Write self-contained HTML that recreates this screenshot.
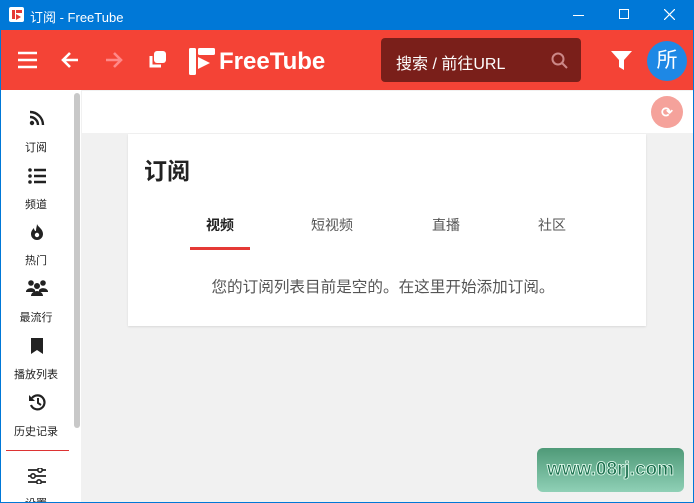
<!DOCTYPE html>
<html><head><meta charset="utf-8"><style>
*{margin:0;padding:0;box-sizing:border-box}
html,body{width:694px;height:503px;overflow:hidden}
body{background:#0078d7;font-family:"Liberation Sans","Noto Sans CJK SC",sans-serif;position:relative}
.abs{position:absolute}
</style></head><body>
<div class="abs" style="left:0;top:0;width:694px;height:30px;background:#0078d7;color:#fff;font-size:13px">
 <div class="abs" style="left:9px;top:7px;width:15px;height:15px;background:#fff;border-radius:2px"><div class="abs" style="left:3px;top:3px;width:3px;height:9px;background:#e53935"></div><div class="abs" style="left:7px;top:3px;width:6px;height:3px;background:#e53935"></div><div class="abs" style="left:7px;top:7px;width:0;height:0;border-left:5px solid #e53935;border-top:3px solid transparent;border-bottom:3px solid transparent"></div></div>
 <div class="abs" style="left:30px;top:7px">订阅 - FreeTube</div>
 <div class="abs" style="left:573px;top:15px;width:11px;height:1px;background:#fff"></div>
 <div class="abs" style="left:619px;top:9px;width:10px;height:10px;border:1px solid #fff"></div>
 <svg class="abs" style="left:664px;top:9px" width="11" height="11"><path d="M0 0l11 11M11 0L0 11" stroke="#fff" stroke-width="1.2"/></svg>
</div>
<div class="abs" style="left:1px;top:30px;width:692px;height:472px;background:#f1f1f1"></div>
<div class="abs" style="left:1px;top:30px;width:692px;height:60px;background:#f44336">
 <svg class="abs" style="left:17px;top:21px" width="20" height="18"><path d="M0 2h19M0 9h19M0 16h19" stroke="#fff" stroke-width="2.6"/></svg>
 <svg class="abs" style="left:59px;top:20px" width="20" height="20"><path d="M18 10H3M10 3L3 10l7 7" stroke="#fff" stroke-width="2.6" fill="none"/></svg>
 <svg class="abs" style="left:103px;top:20px" width="20" height="20"><path d="M2 10h15M10 3l7 7-7 7" stroke="#f88" stroke-width="2.6" fill="none"/></svg>
 <svg class="abs" style="left:145px;top:19px" width="22" height="22"><rect x="8" y="2" width="12" height="12" rx="3" fill="#fff"/><path d="M5 7v10h10" stroke="#fff" stroke-width="3" fill="none"/></svg>
 <svg class="abs" style="left:188px;top:18px" width="28" height="27"><rect x="0" y="0" width="7" height="27" rx="1.5" fill="#fff"/><rect x="9" y="0" width="17" height="7" rx="1.5" fill="#fff"/><path d="M9 9l12 6-12 6z" fill="#fff"/></svg>
 <div class="abs" style="left:218px;top:18px;color:#fff;font-size:24px;font-weight:bold;font-family:'Liberation Sans',sans-serif">FreeTube</div>
 <div class="abs" style="left:380px;top:8px;width:200px;height:44px;background:#7a1f1a;border-radius:4px">
  <div class="abs" style="left:15px;top:12px;color:#fff;font-size:16px">搜索 / 前往URL</div>
  <svg class="abs" style="left:170px;top:14px" width="18" height="18"><circle cx="7" cy="7" r="5.5" stroke="#c88" stroke-width="2" fill="none"/><path d="M11 11l5 5" stroke="#c88" stroke-width="2"/></svg>
 </div>
 <svg class="abs" style="left:610px;top:21px" width="22" height="20"><path d="M0 0h21l-8 9v10l-5-3V9z" fill="#fff"/></svg>
 <div class="abs" style="left:646px;top:11px;width:40px;height:40px;border-radius:50%;background:#1e88e5;color:#fff;font-size:21px;text-align:center;line-height:40px">所</div>
</div>
<div class="abs" style="left:1px;top:90px;width:80px;height:412px;background:#fff;font-size:11px;color:#222;text-align:center;overflow:hidden">
 <div class="abs" style="left:73px;top:3px;width:6px;height:335px;background:#c8c8c8;border-radius:3px"></div>
 <svg class="abs" style="left:28px;top:20px" width="16" height="16"><circle cx="3" cy="13" r="2.2" fill="#222"/><path d="M1 7a8 8 0 0 1 8 8M1 2a13 13 0 0 1 13 13" stroke="#222" stroke-width="2.4" fill="none"/></svg>
 <div class="abs" style="left:0;width:70px;top:49px">订阅</div>
 <svg class="abs" style="left:27px;top:78px" width="18" height="16"><circle cx="2" cy="2" r="1.8" fill="#222"/><circle cx="2" cy="8" r="1.8" fill="#222"/><circle cx="2" cy="14" r="1.8" fill="#222"/><path d="M6 2h12M6 8h12M6 14h12" stroke="#222" stroke-width="2.4"/></svg>
 <div class="abs" style="left:0;width:70px;top:106px">频道</div>
 <svg class="abs" style="left:29px;top:134px" width="14" height="16"><path d="M7 0c1 3 6 5 6 10a6 6 0 0 1-12 0c0-3 2-5 3-6 0 2 1 3 2 3 0-3 1-5 1-7z" fill="#222"/><circle cx="7" cy="11" r="2.2" fill="#fff"/></svg>
 <div class="abs" style="left:0;width:70px;top:162px">热门</div>
 <svg class="abs" style="left:25px;top:190px" width="22" height="16"><circle cx="5" cy="3" r="2.8" fill="#222"/><circle cx="17" cy="3" r="2.8" fill="#222"/><circle cx="11" cy="6" r="3" fill="#222"/><path d="M0 11a5 4 0 0 1 9-1v2H0zM13 10a5 4 0 0 1 9 1v1h-9zM5 16a6 5 0 0 1 12 0z" fill="#222"/></svg>
 <div class="abs" style="left:0;width:70px;top:219px">最流行</div>
 <svg class="abs" style="left:30px;top:248px" width="12" height="16"><path d="M0 0h12v16l-6-4-6 4z" fill="#222"/></svg>
 <div class="abs" style="left:0;width:70px;top:276px">播放列表</div>
 <svg class="abs" style="left:27px;top:303px" width="18" height="18"><path d="M4 5a7 7 0 1 1-1 7" stroke="#222" stroke-width="2.2" fill="none"/><path d="M1 2v6h6z" fill="#222"/><path d="M10 5v5l3 2" stroke="#222" stroke-width="2" fill="none"/></svg>
 <div class="abs" style="left:0;width:70px;top:333px">历史记录</div>
 <div class="abs" style="left:5px;top:360px;width:63px;height:1px;background:#d33"></div>
 <svg class="abs" style="left:27px;top:378px" width="18" height="16"><path d="M0 2h18M0 8h18M0 14h18" stroke="#222" stroke-width="1.8"/><circle cx="12" cy="2" r="2.2" fill="#fff" stroke="#222" stroke-width="1.6"/><circle cx="5" cy="8" r="2.2" fill="#fff" stroke="#222" stroke-width="1.6"/><circle cx="11" cy="14" r="2.2" fill="#fff" stroke="#222" stroke-width="1.6"/></svg>
 <div class="abs" style="left:0;width:70px;top:405px">设置</div>
</div>
<div class="abs" style="left:82px;top:91px;width:611px;height:42px;background:#fff"></div>
<div class="abs" style="left:651px;top:96px;width:32px;height:32px;border-radius:50%;background:#f5a29b;color:#fff;font-size:14px;text-align:center;line-height:32px;font-weight:bold">⟳</div>
<div class="abs" style="left:128px;top:134px;width:518px;height:192px;background:#fff;box-shadow:0 1px 2px rgba(0,0,0,.1)">
 <div class="abs" style="left:16px;top:18px;font-size:23px;font-weight:bold;color:#222">订阅</div>
 <div class="abs" style="left:78px;top:81px;font-size:14px;font-weight:bold;color:#222">视频</div>
 <div class="abs" style="left:62px;top:113px;width:60px;height:3px;background:#e53935"></div>
 <div class="abs" style="left:183px;top:81px;font-size:14px;color:#555">短视频</div>
 <div class="abs" style="left:304px;top:81px;font-size:14px;color:#555">直播</div>
 <div class="abs" style="left:410px;top:81px;font-size:14px;color:#555">社区</div>
 <div class="abs" style="left:0;width:510px;top:141px;text-align:center;font-size:15.6px;color:#555">您的订阅列表目前是空的。在这里开始添加订阅。</div>
</div>
<div class="abs" style="left:537px;top:448px;width:147px;height:44px;border-radius:6px;background:linear-gradient(#4f9a78,#8fd0b6);color:#1c6f4e;font-size:19px;font-weight:bold;text-align:center;line-height:44px;-webkit-text-stroke:0.8px #e9fff3">www.08rj.com</div>
</body></html>
